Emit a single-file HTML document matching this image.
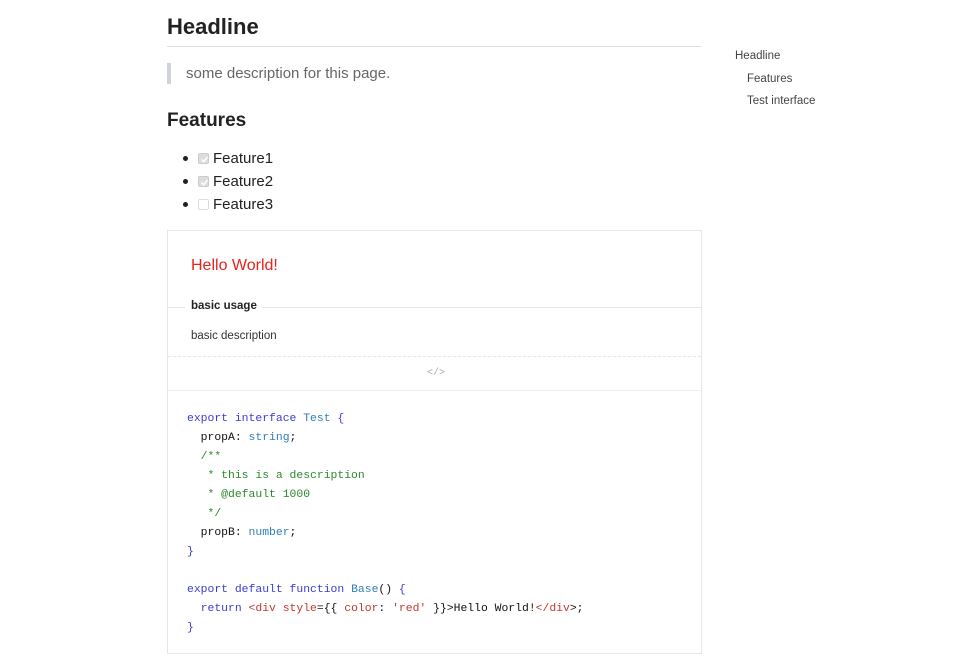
<!DOCTYPE html>
<html><head><meta charset="utf-8"><style>
*{margin:0;padding:0;box-sizing:border-box}
body{width:968px;height:664px;background:#fff;position:relative;font-family:"Liberation Sans",sans-serif;color:#222;overflow:hidden}
.a{position:absolute;white-space:nowrap}
.code{position:absolute;left:187px;top:410px;font-family:"Liberation Mono",monospace;font-size:11.4px;line-height:19px;color:#111;white-space:pre}
.k{color:#3b3bd6}.t{color:#2f7fb8}.c{color:#2a8a2a}.r{color:#c0392b}
.cb{position:absolute;left:198px;width:11px;height:11px;border:1px solid #ccc;border-radius:2px;background:#ddd}
.cb svg{position:absolute;left:1px;top:1px}
.dot{position:absolute;left:183px;width:5px;height:5px;border-radius:50%;background:#222}
</style></head><body>
<div class="a" style="left:167px;top:14px;font-size:22px;font-weight:bold;">Headline</div>
<div class="a" style="left:167px;top:46px;width:534px;height:1px;background:#ddd"></div>
<div class="a" style="left:167px;top:63px;width:4px;height:21px;background:#d0d4da"></div>
<div class="a" style="left:186px;top:65px;font-size:15px;color:#666">some description for this page.</div>
<div class="a" style="left:167px;top:110px;font-size:19px;font-weight:bold">Features</div>
<div class="dot" style="top:156px"></div><div class="cb" style="top:153px"><svg width="9" height="9" viewBox="0 0 9 9"><path d="M1.5 4.5L3.7 6.7L7.5 2" fill="none" stroke="#fff" stroke-width="1.5"/></svg></div><div class="a" style="left:213px;top:150px;font-size:15px">Feature1</div>
<div class="dot" style="top:179px"></div><div class="cb" style="top:176px"><svg width="9" height="9" viewBox="0 0 9 9"><path d="M1.5 4.5L3.7 6.7L7.5 2" fill="none" stroke="#fff" stroke-width="1.5"/></svg></div><div class="a" style="left:213px;top:173px;font-size:15px">Feature2</div>
<div class="dot" style="top:202px"></div><div class="cb" style="top:199px;background:#fff;border-color:#ddd"></div><div class="a" style="left:213px;top:196px;font-size:15px">Feature3</div>

<div class="a" style="left:735px;top:50px;font-size:11.5px;color:#444">Headline</div>
<div class="a" style="left:747px;top:73px;font-size:11.5px;color:#444">Features</div>
<div class="a" style="left:747px;top:95px;font-size:11.5px;color:#444">Test interface</div>

<div class="a" style="left:167px;top:230px;width:535px;height:424px;border:1px solid #e6e6e6"></div>
<div class="a" style="left:191px;top:257px;font-size:16px;color:#e8231c">Hello World!</div>
<div class="a" style="left:168px;top:307px;width:533px;height:1px;background:#e6e6e6"></div>
<div class="a" style="left:185px;top:300px;padding:0 6px;background:#fff;font-size:11.5px;font-weight:bold">basic usage</div>
<div class="a" style="left:191px;top:330px;font-size:11.5px;color:#333">basic description</div>
<div class="a" style="left:168px;top:356px;width:533px;border-top:1px dashed #e6e6e6"></div>
<div class="a" style="left:427px;top:368px;font-size:10px;color:#aaa;font-family:'Liberation Mono',monospace">&lt;/&gt;</div>
<div class="a" style="left:168px;top:390px;width:533px;height:1px;background:#f0f0f0"></div>
<div class="code"><span class="k">export interface</span> <span class="t">Test</span> <span class="k">{</span>
  propA: <span class="t">string</span>;
  <span class="c">/**</span>
<span class="c">   * this is a description</span>
<span class="c">   * @default 1000</span>
<span class="c">   */</span>
  propB: <span class="t">number</span>;
<span class="k">}</span>

<span class="k">export default function</span> <span class="t">Base</span>() <span class="k">{</span>
  <span class="k">return</span> <span class="r">&lt;div style</span>={{ <span class="r">color</span>: <span class="r">'red'</span> }}&gt;Hello World!<span class="r">&lt;/div</span>&gt;;
<span class="k">}</span></div>
</body></html>
